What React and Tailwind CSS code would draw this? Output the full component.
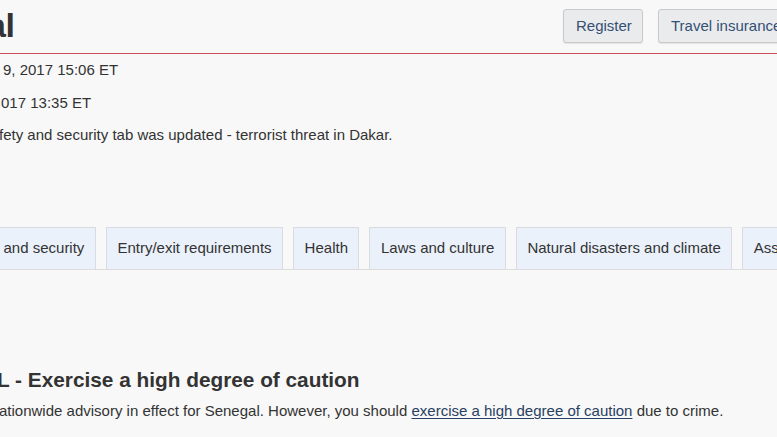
import React from "react";

export default function App() {
  const tabs = [
    { label: "Entry/exit requirements" },
    { label: "Health" },
    { label: "Laws and culture" },
    { label: "Natural disasters and climate" },
    { label: "Assistance" },
  ];
  return (
    <div
      className="w-[777px] h-[437px] overflow-hidden bg-[#f8f8f8] text-[#333]"
      style={{ fontFamily: '"Liberation Sans", Arial, sans-serif' }}
    >
      {/* Header */}
      <div className="flex items-start h-[53px] w-[900px]">
        <div className="w-[563px] shrink-0">
          <h1 className="text-[34px] font-bold leading-[34px] mt-[8px] ml-[-13px] tracking-[-0.5px]">al</h1>
        </div>
        <div className="flex gap-[15px] shrink-0 mt-[9px]">
          <button className="h-[34px] px-[12px] w-[80px] rounded-[3px] border border-[#c9c9c9] bg-[#eaebed] text-[15px] text-[#335075] shadow-[0_1px_1px_rgba(0,0,0,0.08)]">
            Register
          </button>
          <button className="h-[34px] px-[12px] rounded-[3px] border border-[#c9c9c9] bg-[#eaebed] text-[15px] text-[#335075] whitespace-nowrap shadow-[0_1px_1px_rgba(0,0,0,0.08)]">
            Travel insurance
          </button>
        </div>
      </div>
      <div className="h-px w-full bg-[#c9505a]" />

      {/* Meta lines */}
      <div className="text-[15px] leading-[22px] mt-[5px] whitespace-nowrap">
        <p className="ml-[3px] mb-[11px]">9, 2017 15:06 ET</p>
        <p className="ml-[1px] mb-[10px]">017 13:35 ET</p>
        <p className="ml-[-1px]">fety and security tab was updated - terrorist threat in Dakar.</p>
      </div>

      {/* Tabs */}
      <div className="mt-[81px] flex gap-[10px] border-b border-[#dcdcdc] h-[43px] w-[900px] whitespace-nowrap">
        <div className="ml-[-8px] h-[42px] px-[10.5px] flex items-center border border-b-0 border-[#d8dbe0] bg-[#eaf1fb] text-[15px]">
          and security
        </div>
        {tabs.map((t) => (
          <div
            key={t.label}
            className="h-[42px] px-[10.5px] flex items-center border border-b-0 border-[#d8dbe0] bg-[#eaf1fb] text-[15px]"
          >
            {t.label}
          </div>
        ))}
      </div>

      {/* Advisory */}
      <h2 className="mt-[97px] text-[20.8px] font-bold leading-[25px] ml-[-3px] whitespace-nowrap">
        L - Exercise a high degree of caution
      </h2>
      <p className="mt-[8px] text-[15px] leading-[22px] ml-[-1px] whitespace-nowrap">
        ationwide advisory in effect for Senegal. However, you should{" "}
        <a href="#" className="text-[#284162] underline underline-offset-[2px]">
          exercise a high degree of caution
        </a>{" "}
        due to crime.
      </p>
    </div>
  );
}
